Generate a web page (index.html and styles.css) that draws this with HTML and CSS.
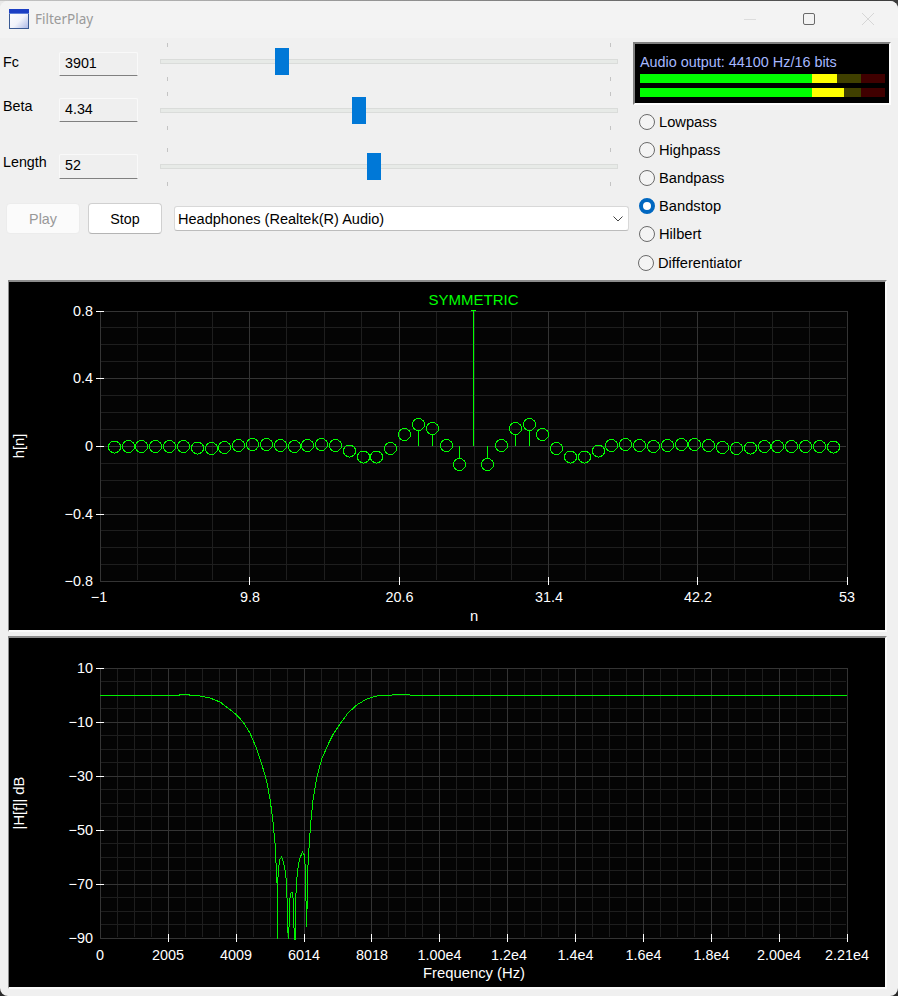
FILE: index.html
```html
<!DOCTYPE html>
<html lang="en">
<head>
<meta charset="utf-8">
<title>FilterPlay</title>
<link rel="stylesheet" href="styles.css">
</head>
<body>
<div class="window">
  <header class="titlebar">
    <svg class="app-icon" width="20" height="20" viewBox="0 0 20 20">
      <defs><linearGradient id="pane" x1="0" y1="0" x2="1" y2="1"><stop offset="0" stop-color="#ffffff"/><stop offset="0.55" stop-color="#f2f4fb"/><stop offset="1" stop-color="#a9b6e6"/></linearGradient></defs>
      <rect x="0.5" y="0.5" width="19" height="19" fill="url(#pane)" stroke="#3a5a94"/>
      <rect x="0" y="0" width="20" height="4" fill="#1c3fc4"/>
      <rect x="0" y="4" width="20" height="1" fill="#5f7fd8"/>
    </svg>
    <span class="app-title">FilterPlay</span>
    <div class="win-buttons">
      <svg width="14" height="14" viewBox="0 0 14 14"><path d="M1 7.5H13" stroke="#dcdcdc" fill="none"/></svg>
      <svg width="14" height="14" viewBox="0 0 14 14"><rect x="1.5" y="1.5" width="11" height="11" rx="1.5" fill="none" stroke="#6a6a6a"/></svg>
      <svg width="14" height="14" viewBox="0 0 14 14"><path d="M1 1L13 13M13 1L1 13" stroke="#d6d6d6" fill="none"/></svg>
    </div>
  </header>

  <section class="controls">
    <div class="left-panel">
      <div class="param param-1">
        <label class="param-label">Fc</label>
        <div class="value-box">3901</div>
        <div class="slider"><span class="track"></span><span class="thumb" style="left:115px"></span></div>
      </div>
      <div class="param param-2">
        <label class="param-label">Beta</label>
        <div class="value-box">4.34</div>
        <div class="slider"><span class="track"></span><span class="thumb" style="left:192px"></span></div>
      </div>
      <div class="param param-3">
        <label class="param-label">Length</label>
        <div class="value-box">52</div>
        <div class="slider"><span class="track"></span><span class="thumb" style="left:207px"></span></div>
      </div>
      <div class="actions">
        <button class="btn btn-disabled">Play</button>
        <button class="btn">Stop</button>
        <div class="combo">
          <span>Headphones (Realtek(R) Audio)</span>
          <svg width="10" height="6" viewBox="0 0 10 6"><path d="M0.5 0.5L5 5L9.5 0.5" fill="none" stroke="#444"/></svg>
        </div>
      </div>
    </div>
    <div class="right-panel">
      <div class="meter">
        <div class="meter-text">Audio output: 44100 Hz/16 bits</div>
        <div class="bar"><i class="seg seg-green" style="width:172px"></i><i class="seg seg-yellow" style="width:25px"></i><i class="seg seg-dimyellow" style="width:24px"></i><i class="seg seg-dimred" style="width:24px"></i></div>
        <div class="bar"><i class="seg seg-green" style="width:172px"></i><i class="seg seg-yellow" style="width:32px"></i><i class="seg seg-dimyellow" style="width:17px"></i><i class="seg seg-dimred" style="width:24px"></i></div>
      </div>
      <div class="radios">
        <div class="radio"><span class="dot"></span>Lowpass</div>
        <div class="radio"><span class="dot"></span>Highpass</div>
        <div class="radio"><span class="dot"></span>Bandpass</div>
        <div class="radio"><span class="dot dot-on"></span>Bandstop</div>
        <div class="radio"><span class="dot"></span>Hilbert</div>
        <div class="radio radio-last"><span class="dot"></span>Differentiator</div>
      </div>
    </div>
  </section>

  <section class="plot plot-top">
    <svg class="plot-svg" width="876" height="348" viewBox="9 282 876 348">
      <rect class="plot-bg" x="100" y="311" width="747" height="270"/>
      <path class="grid-minor" d="M137.5 311V580M175.5 311V580M212.5 311V580M286.5 311V580M324.5 311V580M361.5 311V580M436.5 311V580M474.5 311V580M511.5 311V580M585.5 311V580M623.5 311V580M660.5 311V580M734.5 311V580M772.5 311V580M809.5 311V580M100 327.5H846M100 344.5H846M100 361.5H846M100 395.5H846M100 412.5H846M100 429.5H846M100 463.5H846M100 480.5H846M100 497.5H846M100 530.5H846M100 547.5H846M100 564.5H846"/>
      <path class="grid-major" d="M249.5 311V581M399.5 311V581M548.5 311V581M697.5 311V581M100 378.5H846M100 446.5H846M100 514.5H846"/>
      <rect class="axis-box" x="100.5" y="311.5" width="747" height="270"/>
      <path class="tick" d="M96 311.5H104M96 378.5H104M96 446.5H104M96 514.5H104M249.5 577V585M399.5 577V585M548.5 577V585M697.5 577V585M847.5 577V585"/>
      <g class="axis-text label-end">
        <text x="93" y="316">0.8</text><text x="93" y="383">0.4</text><text x="93" y="451">0</text><text x="93" y="519">−0.4</text><text x="93" y="586">−0.8</text>
      </g>
      <g class="axis-text label-mid">
        <text x="99" y="602">−1</text><text x="250" y="602">9.8</text><text x="399.5" y="602">20.6</text><text x="549" y="602">31.4</text><text x="698" y="602">42.2</text><text x="847" y="602">53</text>
        <text class="axis-title" x="474" y="621">n</text>
      </g>
      <text class="axis-title rotated" transform="translate(24 446) rotate(-90)">h[n]</text>
      <text class="plot-heading" x="473.5" y="305">SYMMETRIC</text>
      <path class="stem" d="M473.5 311V446M471 310.5H476M418.5 430V446M432.5 434V446M515.5 434V446M529.5 430V446M459.5 446V458M487.5 446V458"/>
      <g class="marker">
        <circle cx="114.5" cy="447" r="6"/><circle cx="128.5" cy="446.5" r="6"/><circle cx="141.5" cy="446.5" r="6"/><circle cx="155.5" cy="446.5" r="6"/><circle cx="169.5" cy="446.5" r="6"/><circle cx="183.5" cy="446.5" r="6"/><circle cx="197.5" cy="448" r="6"/><circle cx="211.5" cy="448.5" r="6"/><circle cx="224.5" cy="447.5" r="6"/><circle cx="238.5" cy="445.5" r="6"/><circle cx="252.5" cy="444.5" r="6"/><circle cx="266.5" cy="444.5" r="6"/><circle cx="280.5" cy="445.5" r="6"/><circle cx="294.5" cy="446.5" r="6"/><circle cx="307.5" cy="445.5" r="6"/><circle cx="321.5" cy="444.5" r="6"/><circle cx="335.5" cy="445.5" r="6"/><circle cx="349.5" cy="451" r="6"/><circle cx="363.5" cy="457" r="6"/><circle cx="376.5" cy="457" r="6"/><circle cx="390.5" cy="448.5" r="6"/><circle cx="404.5" cy="434.5" r="6"/><circle cx="418.5" cy="424.5" r="6"/><circle cx="432.5" cy="428.5" r="6"/><circle cx="446.5" cy="445.5" r="6"/><circle cx="459.5" cy="464.5" r="6"/><circle cx="487.5" cy="464.5" r="6"/><circle cx="501.5" cy="445.5" r="6"/><circle cx="515.5" cy="428.5" r="6"/><circle cx="529.5" cy="424.5" r="6"/><circle cx="542.5" cy="434.5" r="6"/><circle cx="556.5" cy="448.5" r="6"/><circle cx="570.5" cy="457" r="6"/><circle cx="584.5" cy="457" r="6"/><circle cx="598.5" cy="451" r="6"/><circle cx="611.5" cy="445.5" r="6"/><circle cx="625.5" cy="444.5" r="6"/><circle cx="639.5" cy="445.5" r="6"/><circle cx="653.5" cy="446.5" r="6"/><circle cx="667.5" cy="445.5" r="6"/><circle cx="681.5" cy="444.5" r="6"/><circle cx="694.5" cy="444.5" r="6"/><circle cx="708.5" cy="445.5" r="6"/><circle cx="722.5" cy="447.5" r="6"/><circle cx="736.5" cy="448.5" r="6"/><circle cx="750.5" cy="448" r="6"/><circle cx="764.5" cy="446.5" r="6"/><circle cx="777.5" cy="446.5" r="6"/><circle cx="791.5" cy="446.5" r="6"/><circle cx="805.5" cy="446.5" r="6"/><circle cx="819.5" cy="446.5" r="6"/><circle cx="833.5" cy="447" r="6"/>
      </g>
    </svg>
  </section>

  <section class="plot plot-bottom">
    <svg class="plot-svg" width="876" height="349" viewBox="9 638 876 349">
      <rect class="plot-bg" x="100" y="668" width="747" height="270"/>
      <path class="grid-minor" d="M117.5 668V937M134.5 668V937M151.5 668V937M185.5 668V937M202.5 668V937M219.5 668V937M253.5 668V937M270.5 668V937M287.5 668V937M321.5 668V937M338.5 668V937M355.5 668V937M388.5 668V937M405.5 668V937M422.5 668V937M456.5 668V937M473.5 668V937M490.5 668V937M524.5 668V937M541.5 668V937M558.5 668V937M592.5 668V937M609.5 668V937M626.5 668V937M660.5 668V937M677.5 668V937M694.5 668V937M728.5 668V937M745.5 668V937M762.5 668V937M796.5 668V937M813.5 668V937M830.5 668V937M100 681.5H846M100 695.5H846M100 708.5H846M100 735.5H846M100 749.5H846M100 762.5H846M100 789.5H846M100 803.5H846M100 816.5H846M100 843.5H846M100 857.5H846M100 870.5H846M100 897.5H846M100 911.5H846M100 924.5H846"/>
      <path class="grid-major" d="M168.5 668V938M236.5 668V938M304.5 668V938M371.5 668V938M439.5 668V938M507.5 668V938M575.5 668V938M643.5 668V938M711.5 668V938M779.5 668V938M100 722.5H846M100 776.5H846M100 830.5H846M100 884.5H846"/>
      <rect class="axis-box" x="100.5" y="668.5" width="747" height="270"/>
      <path class="tick" d="M96 668.5H104M96 722.5H104M96 776.5H104M96 830.5H104M96 884.5H104M168.5 934V942M236.5 934V942M304.5 934V942M371.5 934V942M439.5 934V942M507.5 934V942M575.5 934V942M643.5 934V942M711.5 934V942M779.5 934V942M847.5 934V942"/>
      <g class="axis-text label-end">
        <text x="93" y="673">10</text><text x="93" y="727">−10</text><text x="93" y="781">−30</text><text x="93" y="835">−50</text><text x="93" y="889">−70</text><text x="93" y="943">−90</text>
      </g>
      <g class="axis-text label-mid">
        <text x="100" y="960">0</text><text x="168" y="960">2005</text><text x="236" y="960">4009</text><text x="304" y="960">6014</text><text x="372" y="960">8018</text><text x="439.5" y="960">1.00e4</text><text x="509" y="960">1.2e4</text><text x="575.5" y="960">1.4e4</text><text x="643.5" y="960">1.6e4</text><text x="711.5" y="960">1.8e4</text><text x="779" y="960">2.00e4</text><text x="847" y="960">2.21e4</text>
        <text class="axis-title" x="474" y="978">Frequency (Hz)</text>
      </g>
      <text class="axis-title rotated" transform="translate(24 803) rotate(-90)">|H[f]| dB</text>
      <path class="response" d="M100 695.5L177 695.5L182 694.5L187 694.5L192 695.5L200 696L210 698L220 702L228 708L236.7 715L243 722L250 733L256.7 749L261.7 764L266.7 781L270 799L272.7 819L275 843L276 863L277 883L277.5 889V939V885L278.7 867L280 859L281.7 857L283.3 862L285 870L286.7 883L287.7 930L288.7 939L289.7 900L290.7 893L292 892L293.3 900L294.3 939H295.5L296 893L297.3 872L299.3 860L302.3 852L304.3 855L305.7 872L306.3 927L307 910L307.7 870L308.7 853L309.3 843L311 820L313 800L316.7 778L321.7 759L328.3 744L333.3 734L340 724L348 713L356.7 705L366.7 699L376.7 696L386.7 695.5L396.7 694.5L406.7 694.5L413 695.5H847"/>
    </svg>
  </section>
</div>
</body>
</html>
```

FILE: styles.css
```css
* { box-sizing: border-box; }
html, body { margin: 0; padding: 0; }
html { background: #2a2a2a; }
body { width: 898px; height: 996px; overflow: hidden; padding-top: 1px; font-family: "Liberation Sans", Arial, sans-serif; font-size: 14.3px; color: #000;
  background: linear-gradient(#e8e8e8, #e8e8e8) 0 1px / 12px 12px no-repeat, linear-gradient(to right, #c4c4c4, #8a8a8a 50%, #3c3c3c) 0 0 / 100% 14px no-repeat, #2a2a2a; }

.window { width: 898px; height: 995px; display: flex; flex-direction: column; background: #f0f0f0; border-radius: 8px; overflow: hidden; }

.titlebar { height: 37px; flex: none; display: flex; align-items: center; background: #f3f3f3; padding: 0 23px 2px 9px; }
.app-icon { flex: none; }
.app-title { margin-left: 6px; font-family: "Noto Sans", sans-serif; font-size: 13.5px; color: #9a9a9a; }
.win-buttons { margin-left: auto; display: flex; gap: 45px; }

.controls { height: 242px; flex: none; display: flex; }
.left-panel { width: 633px; flex: none; padding-top: 5px; }

.param { display: flex; height: 38px; }
.param-2 { margin-top: 11px; }
.param-3 { margin-top: 18px; }
.param-label { width: 59px; flex: none; padding-left: 3px; height: 18px; line-height: 18px; margin-top: 5px; }
.param-1 .param-label { margin-top: 10px; }
.value-box { width: 79px; flex: none; height: 24px; line-height: 21px; margin-top: 6px; padding-left: 5px; background: #efefef; border: 1px solid #f9f9f9; border-bottom: 1px solid #808080; border-radius: 2px 2px 0 0; }
.param-1 .value-box { margin-top: 9px; }
.param-3 .value-box { height: 25px; }

.slider { position: relative; width: 458px; height: 38px; margin-left: 22px; flex: none; }
.slider::before, .slider::after { content: ""; position: absolute; left: 7px; right: 7px; height: 4px; border-left: 1px solid #c4c4c4; border-right: 1px solid #c4c4c4; }
.slider::before { top: 0; }
.slider::after { bottom: 0; }
.track { position: absolute; left: 0; right: 0; top: 16px; height: 5px; background: #e7eae7; border: 1px solid #dadcda; }
.thumb { position: absolute; top: 5px; width: 14px; height: 27px; background: #0078d7; }

.actions { display: flex; align-items: center; margin-top: 17px; padding-left: 6px; height: 31px; }
.btn { width: 74px; height: 31px; font: inherit; background: #fff; color: #000; border: 1px solid #d0d0d0; border-bottom-color: #b4b4b4; border-radius: 4px; padding: 0; }
.btn + .btn { margin-left: 8px; }
.btn-disabled { background: #fbfbfb; color: #989898; border-color: #ececec; }
.combo { margin-left: 12px; width: 455px; height: 25px; display: flex; align-items: center; justify-content: space-between; padding: 0 5px 0 3px; background: #fff; border: 1px solid #d8d8d8; border-bottom-color: #bcbcbc; border-radius: 3px; font-size: 14.55px; }

.right-panel { width: 265px; flex: none; }
.meter { width: 258px; height: 63px; margin-top: 4px; background: #000; border: 2px solid #fdfdfd; border-top-color: #808080; border-left-color: #808080; padding: 8px 0 0 5px; }
.meter-text { color: #a6b8ff; height: 22px; line-height: 21px; font-size: 14.4px; }
.bar { display: flex; height: 9px; margin-bottom: 5px; }
.seg { display: block; height: 9px; }
.seg-green { background: #00ff00; }
.seg-yellow { background: #ffff00; }
.seg-dimyellow { background: #404000; }
.seg-dimred { background: #400000; }

.radios { padding: 3px 0 0 6px; font-size: 14.7px; }
.radio { display: flex; align-items: center; gap: 4px; height: 28px; }
.radio-last { margin: 1px 0 0 -1px; }
.dot { width: 16px; height: 16px; border: 1px solid #6a6a6a; border-radius: 50%; background: #f4f4f4; flex: none; }
.dot-on { border: 4.5px solid #0067c0; background: #fff; }

.plot { flex: none; width: 879px; margin-left: 8px; background: #000; border: 2px solid #fafafa; border-top-color: #8c8c8c; border-left: 1px solid #8c8c8c; }
.plot-top { height: 352px; }
.plot-bottom { height: 353px; margin-top: 4px; }
.plot-svg { display: block; }

.plot-bg { fill: #040404; }
.grid-minor { stroke: #1e1e1e; fill: none; shape-rendering: crispEdges; }
.grid-major { stroke: #343434; fill: none; shape-rendering: crispEdges; }
.axis-box { stroke: #343434; fill: none; shape-rendering: crispEdges; }
.tick { stroke: #ffffff; fill: none; shape-rendering: crispEdges; }
.stem { stroke: #00ff00; fill: none; shape-rendering: crispEdges; }
.marker { stroke: #00ff00; fill: none; shape-rendering: crispEdges; }
.response { stroke: #00f000; fill: none; shape-rendering: crispEdges; }

.axis-text text { fill: #ffffff; font-size: 14.4px; }
.label-end text { text-anchor: end; }
.label-mid text { text-anchor: middle; }
.axis-text .axis-title, .axis-title { fill: #ffffff; font-size: 14.8px; text-anchor: middle; }
.plot-heading { fill: #00ff00; font-size: 15px; text-anchor: middle; }
```
